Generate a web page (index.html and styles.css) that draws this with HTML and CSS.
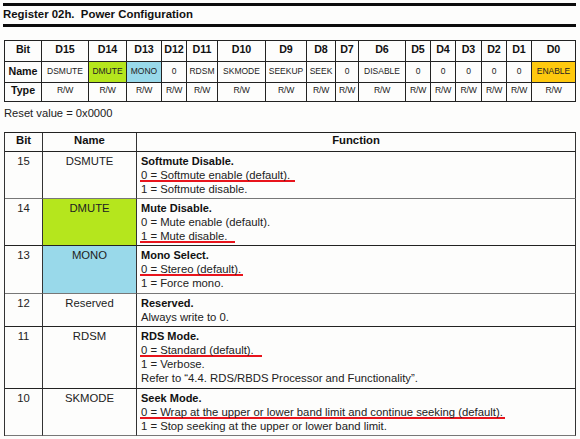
FILE: index.html
```html
<!DOCTYPE html>
<html lang="en">
<head>
<meta charset="utf-8">
<title>Register 02h. Power Configuration</title>
<link rel="stylesheet" href="styles.css">
</head>
<body>
<div class="page">
  <div class="title">Register 02h.  Power Configuration</div>

  <div class="regmap">
    <div class="h">Bit</div>
    <div class="h">D15</div>
    <div class="h">D14</div>
    <div class="h">D13</div>
    <div class="h">D12</div>
    <div class="h">D11</div>
    <div class="h">D10</div>
    <div class="h">D9</div>
    <div class="h">D8</div>
    <div class="h">D7</div>
    <div class="h">D6</div>
    <div class="h">D5</div>
    <div class="h">D4</div>
    <div class="h">D3</div>
    <div class="h">D2</div>
    <div class="h">D1</div>
    <div class="h">D0</div>

    <div class="nl">Name</div>
    <div class="n">DSMUTE</div>
    <div class="n lime">DMUTE</div>
    <div class="n sky">MONO</div>
    <div class="n">0</div>
    <div class="n">RDSM</div>
    <div class="n">SKMODE</div>
    <div class="n">SEEKUP</div>
    <div class="n">SEEK</div>
    <div class="n">0</div>
    <div class="n">DISABLE</div>
    <div class="n">0</div>
    <div class="n">0</div>
    <div class="n">0</div>
    <div class="n">0</div>
    <div class="n">0</div>
    <div class="n gold">ENABLE</div>

    <div class="tl">Type</div>
    <div class="t">R/W</div>
    <div class="t">R/W</div>
    <div class="t">R/W</div>
    <div class="t">R/W</div>
    <div class="t">R/W</div>
    <div class="t">R/W</div>
    <div class="t">R/W</div>
    <div class="t">R/W</div>
    <div class="t">R/W</div>
    <div class="t">R/W</div>
    <div class="t">R/W</div>
    <div class="t">R/W</div>
    <div class="t">R/W</div>
    <div class="t">R/W</div>
    <div class="t">R/W</div>
    <div class="t">R/W</div>
  </div>

  <div class="reset">Reset value = 0x0000</div>

  <div class="fields">
    <div class="fh">Bit</div>
    <div class="fh">Name</div>
    <div class="fh">Function</div>

    <div class="fb soft">15</div>
    <div class="fn soft">DSMUTE</div>
    <div class="ff soft">
      <div class="ft">Softmute Disable.</div>
      <div><span class="mark">0 = Softmute enable (default).</span></div>
      <div>1 = Softmute disable.</div>
    </div>

    <div class="fb">14</div>
    <div class="fn lime">DMUTE</div>
    <div class="ff">
      <div class="ft">Mute Disable.</div>
      <div>0 = Mute enable (default).</div>
      <div><span class="mark long">1 = Mute disable.</span></div>
    </div>

    <div class="fb soft">13</div>
    <div class="fn sky soft">MONO</div>
    <div class="ff soft tall">
      <div class="ft">Mono Select.</div>
      <div><span class="mark short">0 = Stereo (default).</span></div>
      <div>1 = Force mono.</div>
    </div>

    <div class="fb">12</div>
    <div class="fn">Reserved</div>
    <div class="ff">
      <div class="ft">Reserved.</div>
      <div>Always write to 0.</div>
    </div>

    <div class="fb">11</div>
    <div class="fn">RDSM</div>
    <div class="ff tall">
      <div class="ft">RDS Mode.</div>
      <div><span class="mark long">0 = Standard (default).</span></div>
      <div>1 = Verbose.</div>
      <div>Refer to “4.4. RDS/RBDS Processor and Functionality”.</div>
    </div>

    <div class="fb soft">10</div>
    <div class="fn soft">SKMODE</div>
    <div class="ff soft">
      <div class="ft">Seek Mode.</div>
      <div><span class="mark short">0 = Wrap at the upper or lower band limit and continue seeking (default).</span></div>
      <div>1 = Stop seeking at the upper or lower band limit.</div>
    </div>
  </div>
</div>
</body>
</html>
```

FILE: styles.css
```css
html, body {
  margin: 0;
  padding: 0;
  background: #fdfdfc;
}

body {
  font-family: "Liberation Sans", Arial, sans-serif;
  color: #1c1c1c;
}

.page {
  width: 573px;
  margin-left: 3px;
  padding-top: 3px;
}

.title {
  border-top: 3px solid #0c0c0c;
  border-bottom: 3px solid #0c0c0c;
  font-weight: 700;
  font-size: 11.4px;
  line-height: 16px;
  padding-bottom: 2px;
  white-space: pre;
  color: #111;
}

/* ---------- register bit map ---------- */
.regmap {
  box-sizing: border-box;
  width: 572px;
  margin: 13px 0 0 1px;
  display: grid;
  grid-template-columns: 37px 47px 38px 35px 25px 31px 48px 41px 29px 23px 47px 25px 25px 26px 25px 25px 44px;
  grid-template-rows: 21px 21px 19px;
  border-left: 1px solid #222;
  border-top: 1px solid #222;
}

.regmap > div {
  box-sizing: border-box;
  border-right: 1px solid #222;
  border-bottom: 1px solid #222;
  text-align: center;
  white-space: nowrap;
  overflow: hidden;
}

.regmap .h {
  font-weight: 700;
  font-size: 10.7px;
  line-height: 16px;
  color: #111;
}

.regmap .nl {
  font-weight: 700;
  font-size: 10.7px;
  line-height: 18px;
  color: #111;
}

.regmap .n {
  font-size: 8.5px;
  line-height: 18px;
  color: #222;
}

.regmap .tl {
  font-weight: 700;
  font-size: 10.7px;
  line-height: 15px;
  color: #111;
}

.regmap .t {
  font-size: 8.6px;
  line-height: 15px;
  letter-spacing: -0.2px;
  color: #222;
}

.lime { background: #b5e61d; }
.sky { background: #99d9ea; }
.gold { background: #ffc90e; }

/* ---------- reset line ---------- */
.reset {
  margin: 4px 0 0 1px;
  font-size: 11.2px;
  line-height: 14px;
  color: #222;
}

/* ---------- field description table ---------- */
.fields {
  box-sizing: border-box;
  width: 572px;
  margin: 12px 0 0 1px;
  display: grid;
  grid-template-columns: 38px 94px 439px;
  border-left: 1px solid #333;
  border-top: 1px solid #222;
  font-size: 11.3px;
  line-height: 14px;
}

.fields > div {
  border-right: 1px solid #333;
  border-bottom: 1px solid #222;
}

.fields .soft {
  border-bottom-color: #777;
}

.fh {
  font-weight: 700;
  text-align: center;
  padding: 0 0 4px;
  color: #111;
}

.fb,
.fn {
  text-align: center;
  padding: 2px 0;
  color: #222;
}

.ff {
  padding: 2px 0 2px 4px;
  color: #222;
  white-space: nowrap;
}

.ff.tall {
  padding-bottom: 3px;
}

.ft {
  font-weight: 700;
  font-size: 11px;
  color: #111;
}

.mark {
  background: linear-gradient(#e8141c, #e8141c) left bottom / 100% 2px no-repeat;
  padding: 0 5px 1px 1px;
  margin-left: -1px;
}

.mark.long {
  padding-right: 8px;
}

.mark.short {
  padding-right: 2px;
}
```
